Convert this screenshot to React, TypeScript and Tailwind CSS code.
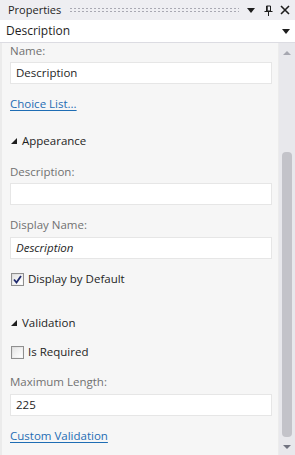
import React from "react";

const font = { fontFamily: '"Open Sans", "Noto Sans", sans-serif' };

function Expander() {
  return (
    <svg width="6" height="6" viewBox="0 0 6 6" className="shrink-0">
      <polygon points="6,0 6,6 0,6" fill="#1e1e1e" />
    </svg>
  );
}

function Label({ children }: { children: React.ReactNode }) {
  return <div className="h-4 leading-4 text-[#717171]">{children}</div>;
}

function TextBox({ value, italic }: { value?: string; italic?: boolean }) {
  return (
    <div
      className={
        "h-[22px] bg-white border border-[#e6e6e6] px-[5px] leading-[20px] text-[#1e1e1e] " +
        (italic ? "italic" : "")
      }
    >
      {value}
    </div>
  );
}

function Section({ title }: { title: string }) {
  return (
    <div className="h-4 flex items-center gap-[5px] pl-[1px] text-[#1e1e1e]">
      <Expander />
      <span className="leading-4">{title}</span>
    </div>
  );
}

function CheckBox({ checked, label }: { checked: boolean; label: string }) {
  return (
    <div className="h-4 flex items-center gap-[4px] pl-[1px]">
      <div className="w-[13px] h-[13px] border border-[#8f8f8f] bg-[linear-gradient(135deg,#dcdcdc,#fafafa)] p-[1px]">
        <div className="w-full h-full bg-[linear-gradient(135deg,#e6e6e6,#ffffff)] flex items-center justify-center">
          {checked && (
            <svg width="9" height="9" viewBox="0 0 9 9">
              <path d="M1 4.5 L3.5 7.5 L8 1" stroke="#1f2a6e" strokeWidth="1.8" fill="none" />
            </svg>
          )}
        </div>
      </div>
      <span className="leading-4 text-[#1e1e1e]">{label}</span>
    </div>
  );
}

function Link({ children }: { children: React.ReactNode }) {
  return <div className="h-4 leading-4 text-[#1e6db4] underline underline-offset-2">{children}</div>;
}

function Scrollbar() {
  return (
    <div className="w-4 shrink-0 bg-[#e8e8ec] flex flex-col items-center">
      <svg width="8" height="4" viewBox="0 0 8 4" className="mt-[8px]">
        <polygon points="0,4 8,4 4,0" fill="#a6a7b0" />
      </svg>
      <div className="flex-1 w-full flex flex-col items-center pt-[97px] pb-[8px]">
        <div className="flex-1 w-[10px] bg-[#c3c3c9] rounded-t-[4px] rounded-b-[4px]" />
      </div>
      <svg width="8" height="4" viewBox="0 0 8 4" className="mb-[6px]">
        <polygon points="0,0 8,0 4,4" fill="#717380" />
      </svg>
    </div>
  );
}

export default function App() {
  return (
    <div className="w-[295px] h-[455px] flex flex-col bg-[#eeeef2] text-[11.5px] overflow-hidden" style={font}>
      {/* Title bar */}
      <div className="h-5 flex items-center pl-[8px] pr-[5px] text-[#1e1e1e]">
        <span className="leading-5 text-[11px]">Properties</span>
        <div className="flex-1 mx-[8px] h-[6px] bg-[radial-gradient(circle,#a9a9b3_0.7px,transparent_0.9px)] bg-[length:4px_3px]" />
        <svg width="8" height="5" viewBox="0 0 8 5" className="mr-[9px]">
          <polygon points="0,0 8,0 4,5" fill="#1e1e1e" />
        </svg>
        <svg width="9" height="11" viewBox="0 0 9 11" className="mr-[7px]">
          <path d="M2.5 1 H6.5 V6 H2.5 Z" stroke="#1e1e1e" strokeWidth="1" fill="none" />
          <path d="M3 1 V6" stroke="#1e1e1e" strokeWidth="1.5" />
          <path d="M0.5 6.5 H8.5" stroke="#1e1e1e" strokeWidth="1" />
          <path d="M4.5 7 V11" stroke="#1e1e1e" strokeWidth="1" />
        </svg>
        <svg width="10" height="10" viewBox="0 0 10 10">
          <path d="M1 1 L9 9 M9 1 L1 9" stroke="#1e1e1e" strokeWidth="1.6" />
        </svg>
      </div>

      {/* Object selector */}
      <div className="h-[23px] bg-white border-b border-[#dcdce2] flex items-center pl-[6px] pr-[3px] text-[#1e1e1e]">
        <span className="flex-1 leading-5 text-[12px]">Description</span>
        <svg width="8" height="5" viewBox="0 0 8 5" className="mr-[2px]">
          <polygon points="0,0 8,0 4,5" fill="#1e1e1e" />
        </svg>
      </div>

      {/* Content */}
      <div className="flex-1 flex bg-[#f6f6f6] border-l-2 border-[#ebebeb] min-h-0">
        <div className="flex-1 flex flex-col pl-[8px] pr-[6px] border-r border-[#ececec]">
          <Label>Name:</Label>
          <div className="mt-[3px]">
            <TextBox value="Description" />
          </div>
          <div className="mt-[12px]">
            <Link>Choice List...</Link>
          </div>

          <div className="mt-[21px]">
            <Section title="Appearance" />
          </div>
          <div className="mt-[15px]">
            <Label>Description:</Label>
          </div>
          <div className="mt-[3px]">
            <TextBox />
          </div>
          <div className="mt-[12px]">
            <Label>Display Name:</Label>
          </div>
          <div className="mt-[4px]">
            <TextBox value="Description" italic />
          </div>
          <div className="mt-[12px]">
            <CheckBox checked label="Display by Default" />
          </div>

          <div className="mt-[28px]">
            <Section title="Validation" />
          </div>
          <div className="mt-[13px]">
            <CheckBox checked={false} label="Is Required" />
          </div>
          <div className="mt-[14px]">
            <Label>Maximum Length:</Label>
          </div>
          <div className="mt-[4px]">
            <TextBox value="225" />
          </div>
          <div className="mt-[12px]">
            <Link>Custom Validation</Link>
          </div>
        </div>
        <Scrollbar />
      </div>
    </div>
  );
}
